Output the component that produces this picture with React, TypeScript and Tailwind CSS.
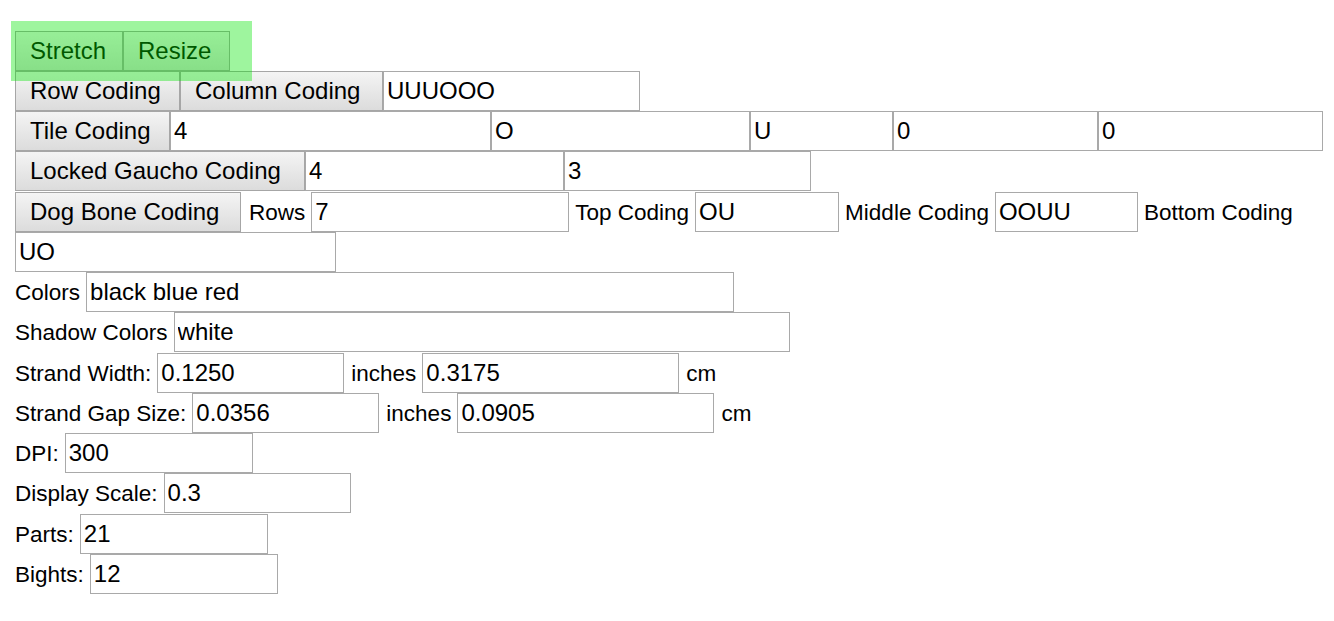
import React from "react";

const font = "font-['Liberation_Sans',Arial,sans-serif]";
const btn =
	"h-[40px] shrink-0 border border-[#a6a6a6] bg-gradient-to-b from-[#f4f4f4] to-[#dcdcdc] text-[24px] text-black text-left pl-[14px] leading-none";
const inp =
	"h-[40px] shrink-0 border border-[#a9a9a9] bg-white px-[3px] text-[24px] text-black outline-none";
const lbl = "shrink-0 text-[22.5px] text-black whitespace-nowrap";

function Row(props: { children: React.ReactNode; tall?: boolean }) {
	return (
		<div
			className={
				"flex items-baseline pl-[15px] " + (props.tall ? "h-[41px]" : "h-[40px]")
			}
		>
			{props.children}
		</div>
	);
}

function Input(props: { value: string; w: string; ml?: string }) {
	return (
		<input
			type="text"
			defaultValue={props.value}
			className={inp + " " + props.w + " " + (props.ml || "")}
		/>
	);
}

function App() {
	return (
		<div className={"relative min-h-screen bg-white pt-[31px] " + font}>
			<Row>
				<button className={btn + " w-[108px]"}>Stretch</button>
				<button className={btn + " w-[107px]"}>Resize</button>
			</Row>
			<Row>
				<button className={btn + " w-[165px]"}>Row Coding</button>
				<button className={btn + " w-[203px]"}>Column Coding</button>
				<Input value="UUUOOO" w="w-[257px]" />
			</Row>
			<Row>
				<button className={btn + " w-[155px]"}>Tile Coding</button>
				<Input value="4" w="w-[321px]" />
				<Input value="O" w="w-[259px]" />
				<Input value="U" w="w-[143px]" />
				<Input value="0" w="w-[205px]" />
				<Input value="0" w="w-[225px]" />
			</Row>
			<Row tall>
				<button className={btn + " w-[290px]"}>Locked Gaucho Coding</button>
				<Input value="4" w="w-[259px]" />
				<Input value="3" w="w-[247px]" />
			</Row>
			<Row>
				<button className={btn + " w-[226px]"}>Dog Bone Coding</button>
				<span className={lbl + " pl-[8px]"}>Rows</span>
				<Input value="7" w="w-[258px]" ml="ml-[6px]" />
				<span className={lbl + " ml-[6px]"}>Top Coding</span>
				<Input value="OU" w="w-[144px]" ml="ml-[6px]" />
				<span className={lbl + " ml-[6px]"}>Middle Coding</span>
				<Input value="OOUU" w="w-[143px]" ml="ml-[6px]" />
				<span className={lbl + " ml-[6px]"}>Bottom Coding</span>
			</Row>
			<Row>
				<Input value="UO" w="w-[321px]" />
			</Row>
			<Row>
				<span className={lbl}>Colors</span>
				<Input value="black blue red" w="w-[648px]" ml="ml-[6px]" />
			</Row>
			<Row tall>
				<span className={lbl}>Shadow Colors</span>
				<Input value="white" w="w-[616px]" ml="ml-[6px]" />
			</Row>
			<Row>
				<span className={lbl}>Strand Width:</span>
				<Input value="0.1250" w="w-[187px]" ml="ml-[6px]" />
				<span className={lbl + " ml-[7px]"}>inches</span>
				<Input value="0.3175" w="w-[257px]" ml="ml-[6px]" />
				<span className={lbl + " ml-[7px]"}>cm</span>
			</Row>
			<Row>
				<span className={lbl}>Strand Gap Size:</span>
				<Input value="0.0356" w="w-[187px]" ml="ml-[6px]" />
				<span className={lbl + " ml-[7px]"}>inches</span>
				<Input value="0.0905" w="w-[257px]" ml="ml-[6px]" />
				<span className={lbl + " ml-[7px]"}>cm</span>
			</Row>
			<Row>
				<span className={lbl}>DPI:</span>
				<Input value="300" w="w-[188px]" ml="ml-[6px]" />
			</Row>
			<Row tall>
				<span className={lbl}>Display Scale:</span>
				<Input value="0.3" w="w-[187px]" ml="ml-[6px]" />
			</Row>
			<Row>
				<span className={lbl}>Parts:</span>
				<Input value="21" w="w-[188px]" ml="ml-[6px]" />
			</Row>
			<Row>
				<span className={lbl}>Bights:</span>
				<Input value="12" w="w-[188px]" ml="ml-[6px]" />
			</Row>

			{/* green highlight laid over the top buttons */}
			<div className="pointer-events-none absolute left-[11px] top-[21px] h-[60px] w-[241px] bg-[rgba(0,229,0,0.38)]"></div>
		</div>
	);
}

export default App;
